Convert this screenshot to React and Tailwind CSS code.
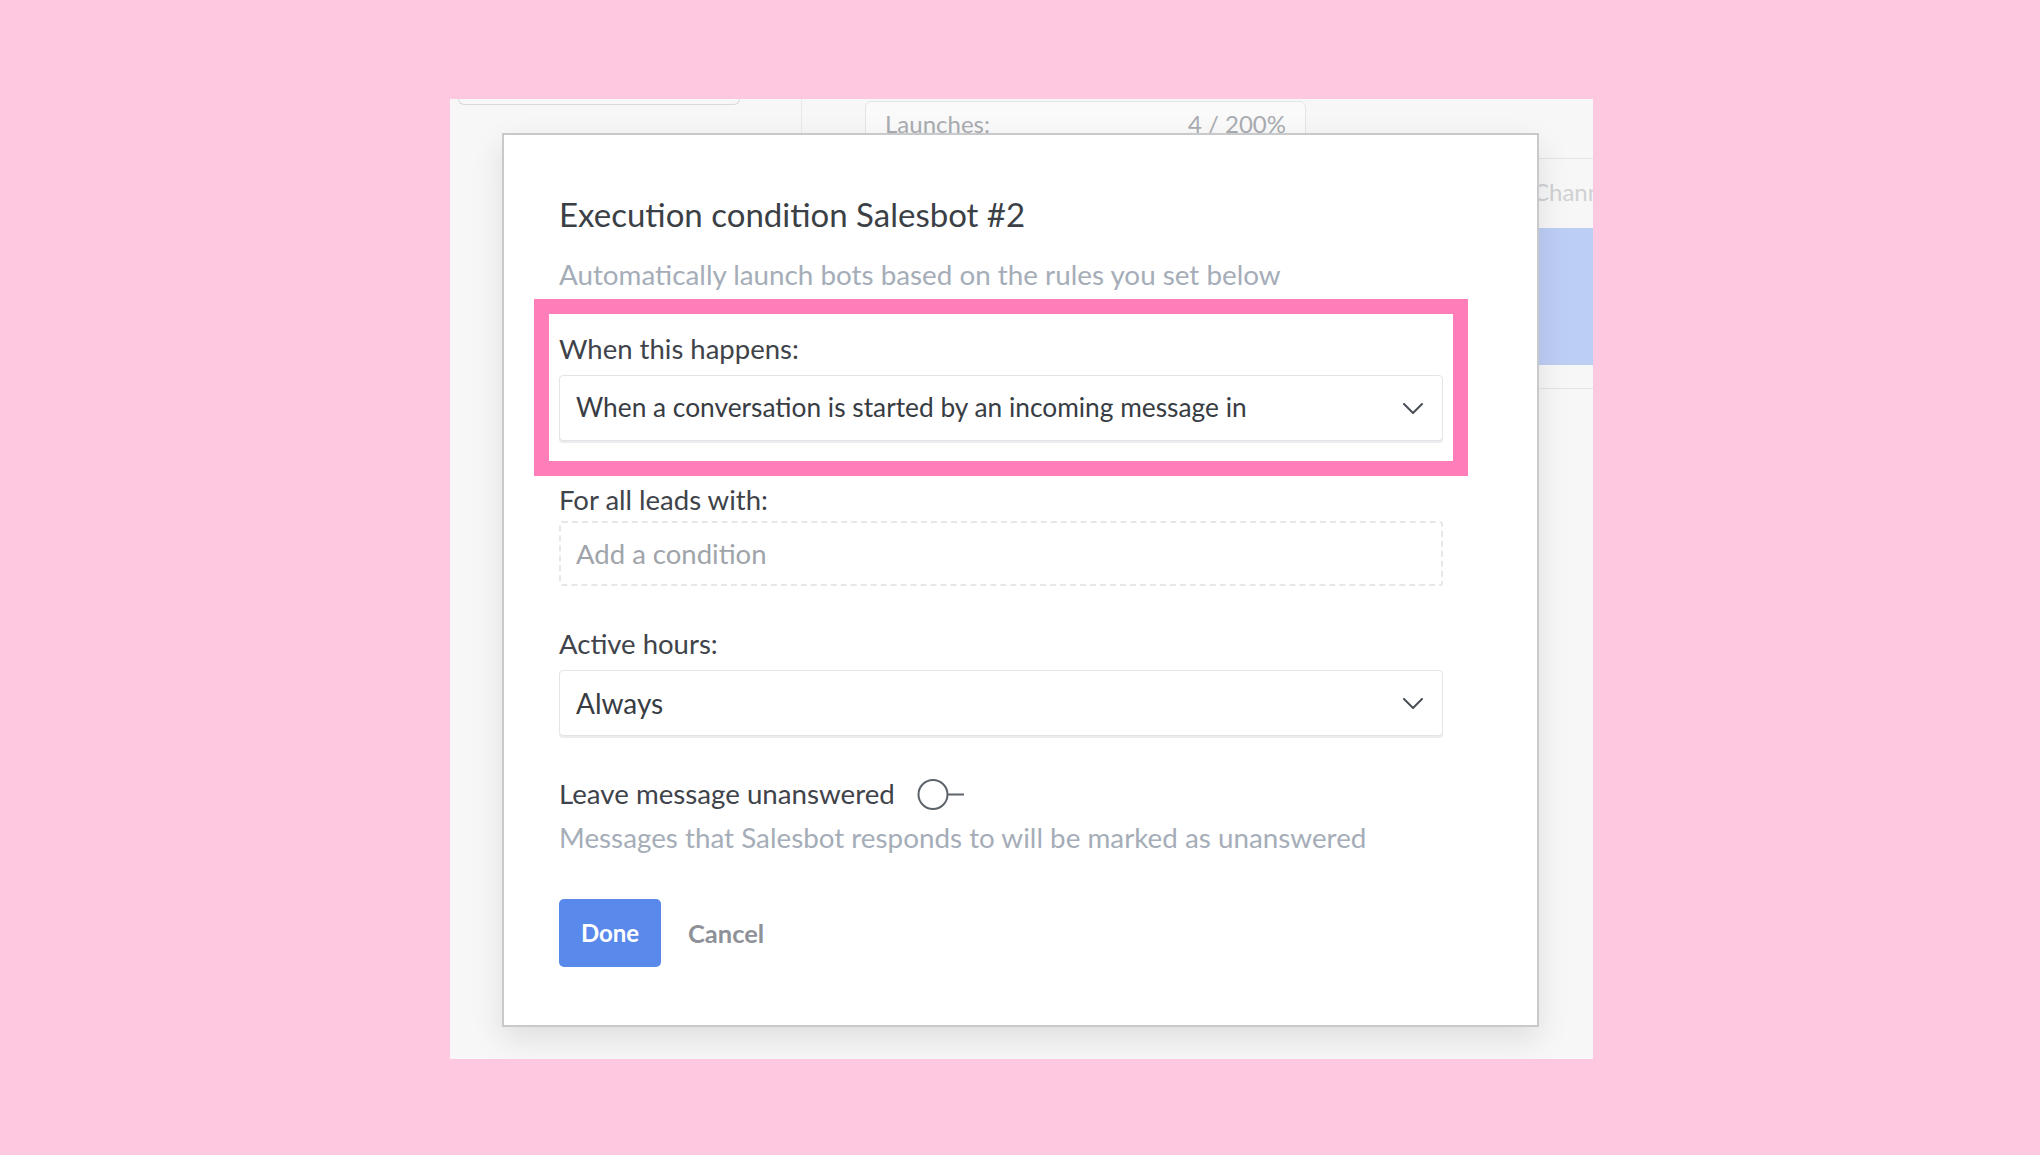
import React from 'react';

const font = { fontFamily: 'Lato, "Open Sans", sans-serif' };

function Chevron() {
    return (
        <svg width="20" height="11" viewBox="0 0 20 11" fill="none">
            <polyline points="1,1 10,10 19,1" stroke="#4a4f57" strokeWidth="2" strokeLinecap="round" strokeLinejoin="round" />
        </svg>
    );
}

function Toggle() {
    return (
        <svg width="48" height="33" viewBox="0 0 48 33" fill="none">
            <circle cx="16" cy="16.5" r="14.5" stroke="#5d636b" strokeWidth="2" />
            <line x1="30.5" y1="16.5" x2="47" y2="16.5" stroke="#5d636b" strokeWidth="2" />
        </svg>
    );
}

function Select({ children, size }) {
    return (
        <div className="flex items-center justify-between h-[66px] pl-[16px] pr-[19px] bg-white border border-[#e2e4e7] rounded-[4px] shadow-[0_2px_0_#ebecee]">
            <span className={`${size} text-[#383c43]`}>{children}</span>
            <Chevron />
        </div>
    );
}

export default function App() {
    return (
        <div className="w-full h-[1155px] bg-[#fec8e0] pt-[99px] pl-[450px]" style={font}>
            <div className="relative w-[1143px] h-[960px] bg-[#f7f7f7] overflow-hidden">
                {/* page behind the modal */}
                <div className="flex h-full items-start">
                    <div className="w-[352px] h-[60px] shrink-0 border-r border-[#e8e8e8] pl-[8px]">
                        <div className="w-[282px] h-[6px] border border-t-0 border-[#d9dadc] rounded-b-[6px]" />
                    </div>
                    <div className="flex-1 pl-[63px] pt-[2px]">
                        <div className="w-[441px] h-[200px] border border-[#e3e4e6] rounded-t-[6px] bg-[#fafafa] flex justify-between px-[19px] pt-[6px] text-[24px] text-[#a9acb1] leading-[32px]">
                            <span>Launches:</span>
                            <span>4 / 200%</span>
                        </div>
                    </div>
                    <div className="w-[60px] shrink-0 pt-[59px]">
                        <div className="border-t border-[#e4e4e4] h-[70px] pt-[18px] text-[24px] leading-[30px] text-[#cfd1d4] whitespace-nowrap">Chann</div>
                        <div className="h-[137px] bg-[#bdcef5]" />
                        <div className="h-[23px]" />
                        <div className="border-t border-[#e4e4e4]" />
                    </div>
                </div>

                {/* modal */}
                <div className="absolute left-[52px] top-[34px] w-[1037px] h-[894px] bg-white border-2 border-[#c8c9cb] shadow-[0_12px_30px_rgba(0,0,0,0.10)] pl-[55px] pr-[94px] pt-[59px]">
                    <h1 className="text-[33px] leading-[40px] text-[#3b3f46]">Execution condition Salesbot #2</h1>
                    <p className="mt-[25px] text-[27.8px] leading-[32px] text-[#a5adb8]">Automatically launch bots based on the rules you set below</p>

                    <div className="mt-[8px] -mx-[25px] border-[15px] border-[#ff7eb9] px-[10px] pt-[19px] pb-[20px]">
                        <div className="text-[27.5px] leading-[32px] text-[#3f434a]">When this happens:</div>
                        <div className="mt-[10px]">
                            <Select size="text-[26.3px]">When a conversation is started by an incoming message in</Select>
                        </div>
                    </div>

                    <div className="mt-[8px] text-[27.5px] leading-[32px] text-[#3f434a]">For all leads with:</div>
                    <div className="mt-[5px] h-[65px] border-2 border-dashed border-[#e6e7e9] rounded-[3px] flex items-center pl-[15px] text-[27.5px] text-[#9fa4aa]">
                        Add a condition
                    </div>

                    <div className="mt-[42px] text-[27.5px] leading-[32px] text-[#3f434a]">Active hours:</div>
                    <div className="mt-[10px]">
                        <Select size="text-[28px]">Always</Select>
                    </div>

                    <div className="mt-[42px] flex items-center gap-[22px] h-[32px]">
                        <span className="text-[27.7px] leading-[32px] text-[#3f434a]">Leave message unanswered</span>
                        <Toggle />
                    </div>
                    <p className="mt-[12px] text-[27.8px] leading-[32px] text-[#a5adb8]">Messages that Salesbot responds to will be marked as unanswered</p>

                    <div className="mt-[45px] flex items-center gap-[27px]">
                        <button className="w-[102px] h-[68px] rounded-[5px] bg-[#5a89ec] text-white text-[24px] font-bold">Done</button>
                        <button className="text-[25.5px] font-bold text-[#8e9298]">Cancel</button>
                    </div>
                </div>
            </div>
        </div>
    );
}
